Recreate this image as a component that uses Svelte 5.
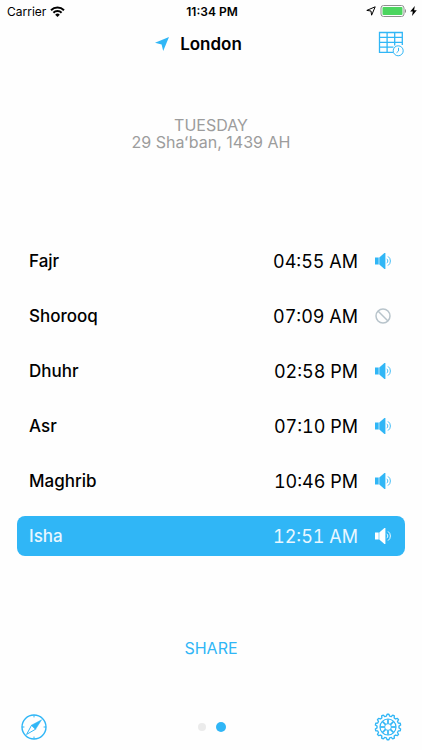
<script lang="ts">
  interface Prayer {
    name: string;
    time: string;
    muted?: boolean;
    current?: boolean;
  }

  const prayers: Prayer[] = [
    { name: 'Fajr', time: '04:55 AM' },
    { name: 'Shorooq', time: '07:09 AM', muted: true },
    { name: 'Dhuhr', time: '02:58 PM' },
    { name: 'Asr', time: '07:10 PM' },
    { name: 'Maghrib', time: '10:46 PM' },
    { name: 'Isha', time: '12:51 AM', current: true },
  ];

  const teeth = 14;
  const gearPath = gear(teeth, 12.8, 11);
  const spokes = Array.from({ length: 8 }, (_, i) => i * 45);

  function gear(count: number, outer: number, inner: number) {
    const step = (Math.PI * 2) / count;
    const points: string[] = [];
    for (let i = 0; i < count; i++) {
      const profile: [number, number][] = [
        [-0.32, inner],
        [-0.16, outer],
        [0.16, outer],
        [0.32, inner],
      ];
      for (const [offset, r] of profile) {
        const a = (i + offset) * step;
        points.push(`${(14 + r * Math.sin(a)).toFixed(2)} ${(14 - r * Math.cos(a)).toFixed(2)}`);
      }
    }
    return `M${points.join('L')}Z`;
  }
</script>

<div class="screen">
  <div class="status">
    <div class="carrier">
      <span>Carrier</span>
      <svg width="15" height="11" viewBox="0 0 15 11" fill="none" stroke="currentColor" stroke-width="2" aria-hidden="true">
        <path d="M1 4.2a9.3 9.3 0 0 1 13 0" />
        <path d="M3.4 6.8a5.8 5.8 0 0 1 8.2 0" />
        <path d="M7.5 11 5.2 8.7a3.3 3.3 0 0 1 4.6 0z" fill="currentColor" stroke="none" />
      </svg>
    </div>
    <span class="clock">11:34 PM</span>
    <div class="power">
      <svg width="10" height="10" viewBox="0 0 10 10" fill="none" stroke="currentColor" aria-hidden="true">
        <path d="M9.2 .8 5.6 9.2 5 5 .8 4.4z" stroke-linejoin="round" />
      </svg>
      <svg width="26" height="12" viewBox="0 0 26 12" aria-hidden="true">
        <rect x="1" y=".5" width="23" height="11" rx="2.5" fill="none" stroke="#8f8f8f" />
        <rect x="2.5" y="2" width="20" height="8" rx="1" fill="#4cd55f" />
        <path d="M25 4c1.4.6 1.4 3.4 0 4z" fill="#8f8f8f" />
      </svg>
      <svg width="7" height="10" viewBox="0 0 7 10" fill="currentColor" aria-hidden="true">
        <path d="M4.8 0 .2 5.6h2.6L2 10l4.8-5.8H4.1z" />
      </svg>
    </div>
  </div>

  <header>
    <h1>
      <svg width="14" height="14" viewBox="0 0 14 14" fill="currentColor" aria-hidden="true">
        <path d="M14 0 8.2 14 6.6 7.6 0 5.8z" />
      </svg>
      London
    </h1>
    <button class="timetable" aria-label="Timetable">
      <svg width="26" height="26" viewBox="0 0 26 26" fill="none" stroke="currentColor" aria-hidden="true">
        <path d="M15 21.3H1.5V1.5h22.8V14M1.5 6.4h22.8M1.5 11.3h22.8M1.5 16.2h14M9.1 1.5v19.8M16.7 1.5v13" stroke-width="1.3" />
        <circle cx="20.2" cy="19.8" r="5" />
        <path d="M20.5 16.8v3.2l-2 1.8" />
      </svg>
    </button>
  </header>

  <main>
    <p class="date">TUESDAY<br />29 Shaʻban, 1439 AH</p>

    <ul>
      {#each prayers as prayer}
        <li class:current={prayer.current}>
          <span class="name">{prayer.name}</span>
          <time>{prayer.time}</time>
          <button class="sound" class:muted={prayer.muted} aria-label="{prayer.name} notification">
            {#if prayer.muted}
              <svg width="16" height="16" viewBox="0 0 16 16" fill="none" stroke="currentColor" stroke-width="1.5" aria-hidden="true">
                <circle cx="8" cy="8" r="7" />
                <path d="m3 3 10 10" />
              </svg>
            {:else}
              <svg width="17" height="16" viewBox="0 0 17 16" aria-hidden="true">
                <path d="M0 4.6h3.7v6.8H0zM4.3 4.4 9.4 0h1v16h-1L4.3 11.6z" fill="currentColor" />
                <path d="M11.6 5.8a2.6 2.6 0 0 1 0 4.4M13 3.4a5.6 5.6 0 0 1 0 9.2" fill="none" stroke="currentColor" stroke-width=".9" />
              </svg>
            {/if}
          </button>
        </li>
      {/each}
    </ul>

    <button class="share">SHARE</button>
  </main>

  <footer>
    <button aria-label="Qibla compass">
      <svg width="28" height="28" viewBox="0 0 28 28" fill="none" stroke="currentColor" aria-hidden="true">
        <circle cx="14" cy="14" r="12" stroke-width="1.4" />
        <path d="M14 2v2.4M14 23.6V26M2 14h2.4M23.6 14H26" />
        <path d="M21.6 6.8 11.4 12.2l4.2 4z" fill="currentColor" stroke-width=".5" />
        <path d="M11.6 12.2 6.6 21.4 15.6 16.2z" />
      </svg>
    </button>
    <div class="pages">
      <span></span>
      <span class="active"></span>
    </div>
    <button aria-label="Settings">
      <svg width="28" height="28" viewBox="0 0 28 28" fill="none" stroke="currentColor" aria-hidden="true">
        <path d={gearPath} stroke-width="1.3" stroke-linejoin="round" />
        <circle cx="14" cy="14" r="8" stroke-width="1.2" />
        <circle cx="14" cy="14" r="3.4" />
        {#each spokes as angle}
          <path d="M14 6.2v4.4" stroke-width="1.7" transform="rotate({angle} 14 14)" />
        {/each}
      </svg>
    </button>
  </footer>
</div>

<style>
  :global(body) {
    margin: 0;
    background: #fefefe;
  }

  .screen {
    --blue: #30b6f6;
    display: flex;
    flex-direction: column;
    min-height: 100vh;
    font-family: Inter, 'Liberation Sans', sans-serif;
    color: #000;
  }

  svg {
    display: block;
    flex-shrink: 0;
  }

  button {
    padding: 0;
    border: 0;
    background: none;
    color: var(--blue);
    font: inherit;
    cursor: pointer;
  }

  .status {
    display: grid;
    grid-template-columns: 1fr auto 1fr;
    align-items: center;
    height: 22px;
    padding: 0 5px 0 7px;
    font-size: 12px;
  }

  .carrier,
  .power {
    display: flex;
    align-items: center;
    gap: 4px;
  }

  .power {
    justify-content: flex-end;
  }

  .clock {
    font-weight: 600;
  }

  header {
    display: grid;
    grid-template-columns: 1fr auto 1fr;
    align-items: center;
    height: 44px;
    padding: 0 18px;
  }

  h1 {
    display: flex;
    grid-column: 2;
    align-items: center;
    gap: 11px;
    margin: 0;
    padding-right: 25px;
    font-size: 17px;
    font-weight: 600;
    line-height: 22px;
  }

  h1 svg {
    color: var(--blue);
  }

  .timetable {
    justify-self: end;
  }

  main {
    display: flex;
    flex-direction: column;
    align-items: center;
    padding: 51px 17px 0;
  }

  .date {
    margin: 0;
    color: #9c9c9c;
    font-size: 16px;
    line-height: 17px;
    text-align: center;
  }

  ul {
    display: flex;
    flex-direction: column;
    align-self: stretch;
    gap: 15px;
    margin: 90px 0 0;
    padding: 0;
    list-style: none;
  }

  li {
    display: flex;
    align-items: center;
    height: 40px;
    padding: 0 13px 0 12px;
    border-radius: 8px;
    font-size: 18px;
  }

  .name {
    flex: 1;
    font-size: 17px;
    font-weight: 500;
  }

  time {
    font-variant-numeric: tabular-nums;
  }

  .sound {
    width: 17px;
    margin-left: 17px;
  }

  .muted {
    color: #b8c4cb;
  }

  .current {
    background: var(--blue);
    color: #e8f7ff;
  }

  .current .sound {
    color: #fff;
  }

  .share {
    margin-top: 80px;
    font-size: 16px;
    line-height: 24px;
  }

  footer {
    display: flex;
    align-items: center;
    justify-content: space-between;
    margin-top: auto;
    padding: 0 20px 9px;
  }

  .pages {
    display: flex;
    align-items: center;
    gap: 10px;
    padding-left: 2px;
  }

  .pages span {
    width: 8px;
    height: 8px;
    border-radius: 50%;
    background: #ebebeb;
  }

  .pages .active {
    width: 10px;
    height: 10px;
    background: var(--blue);
  }
</style>
